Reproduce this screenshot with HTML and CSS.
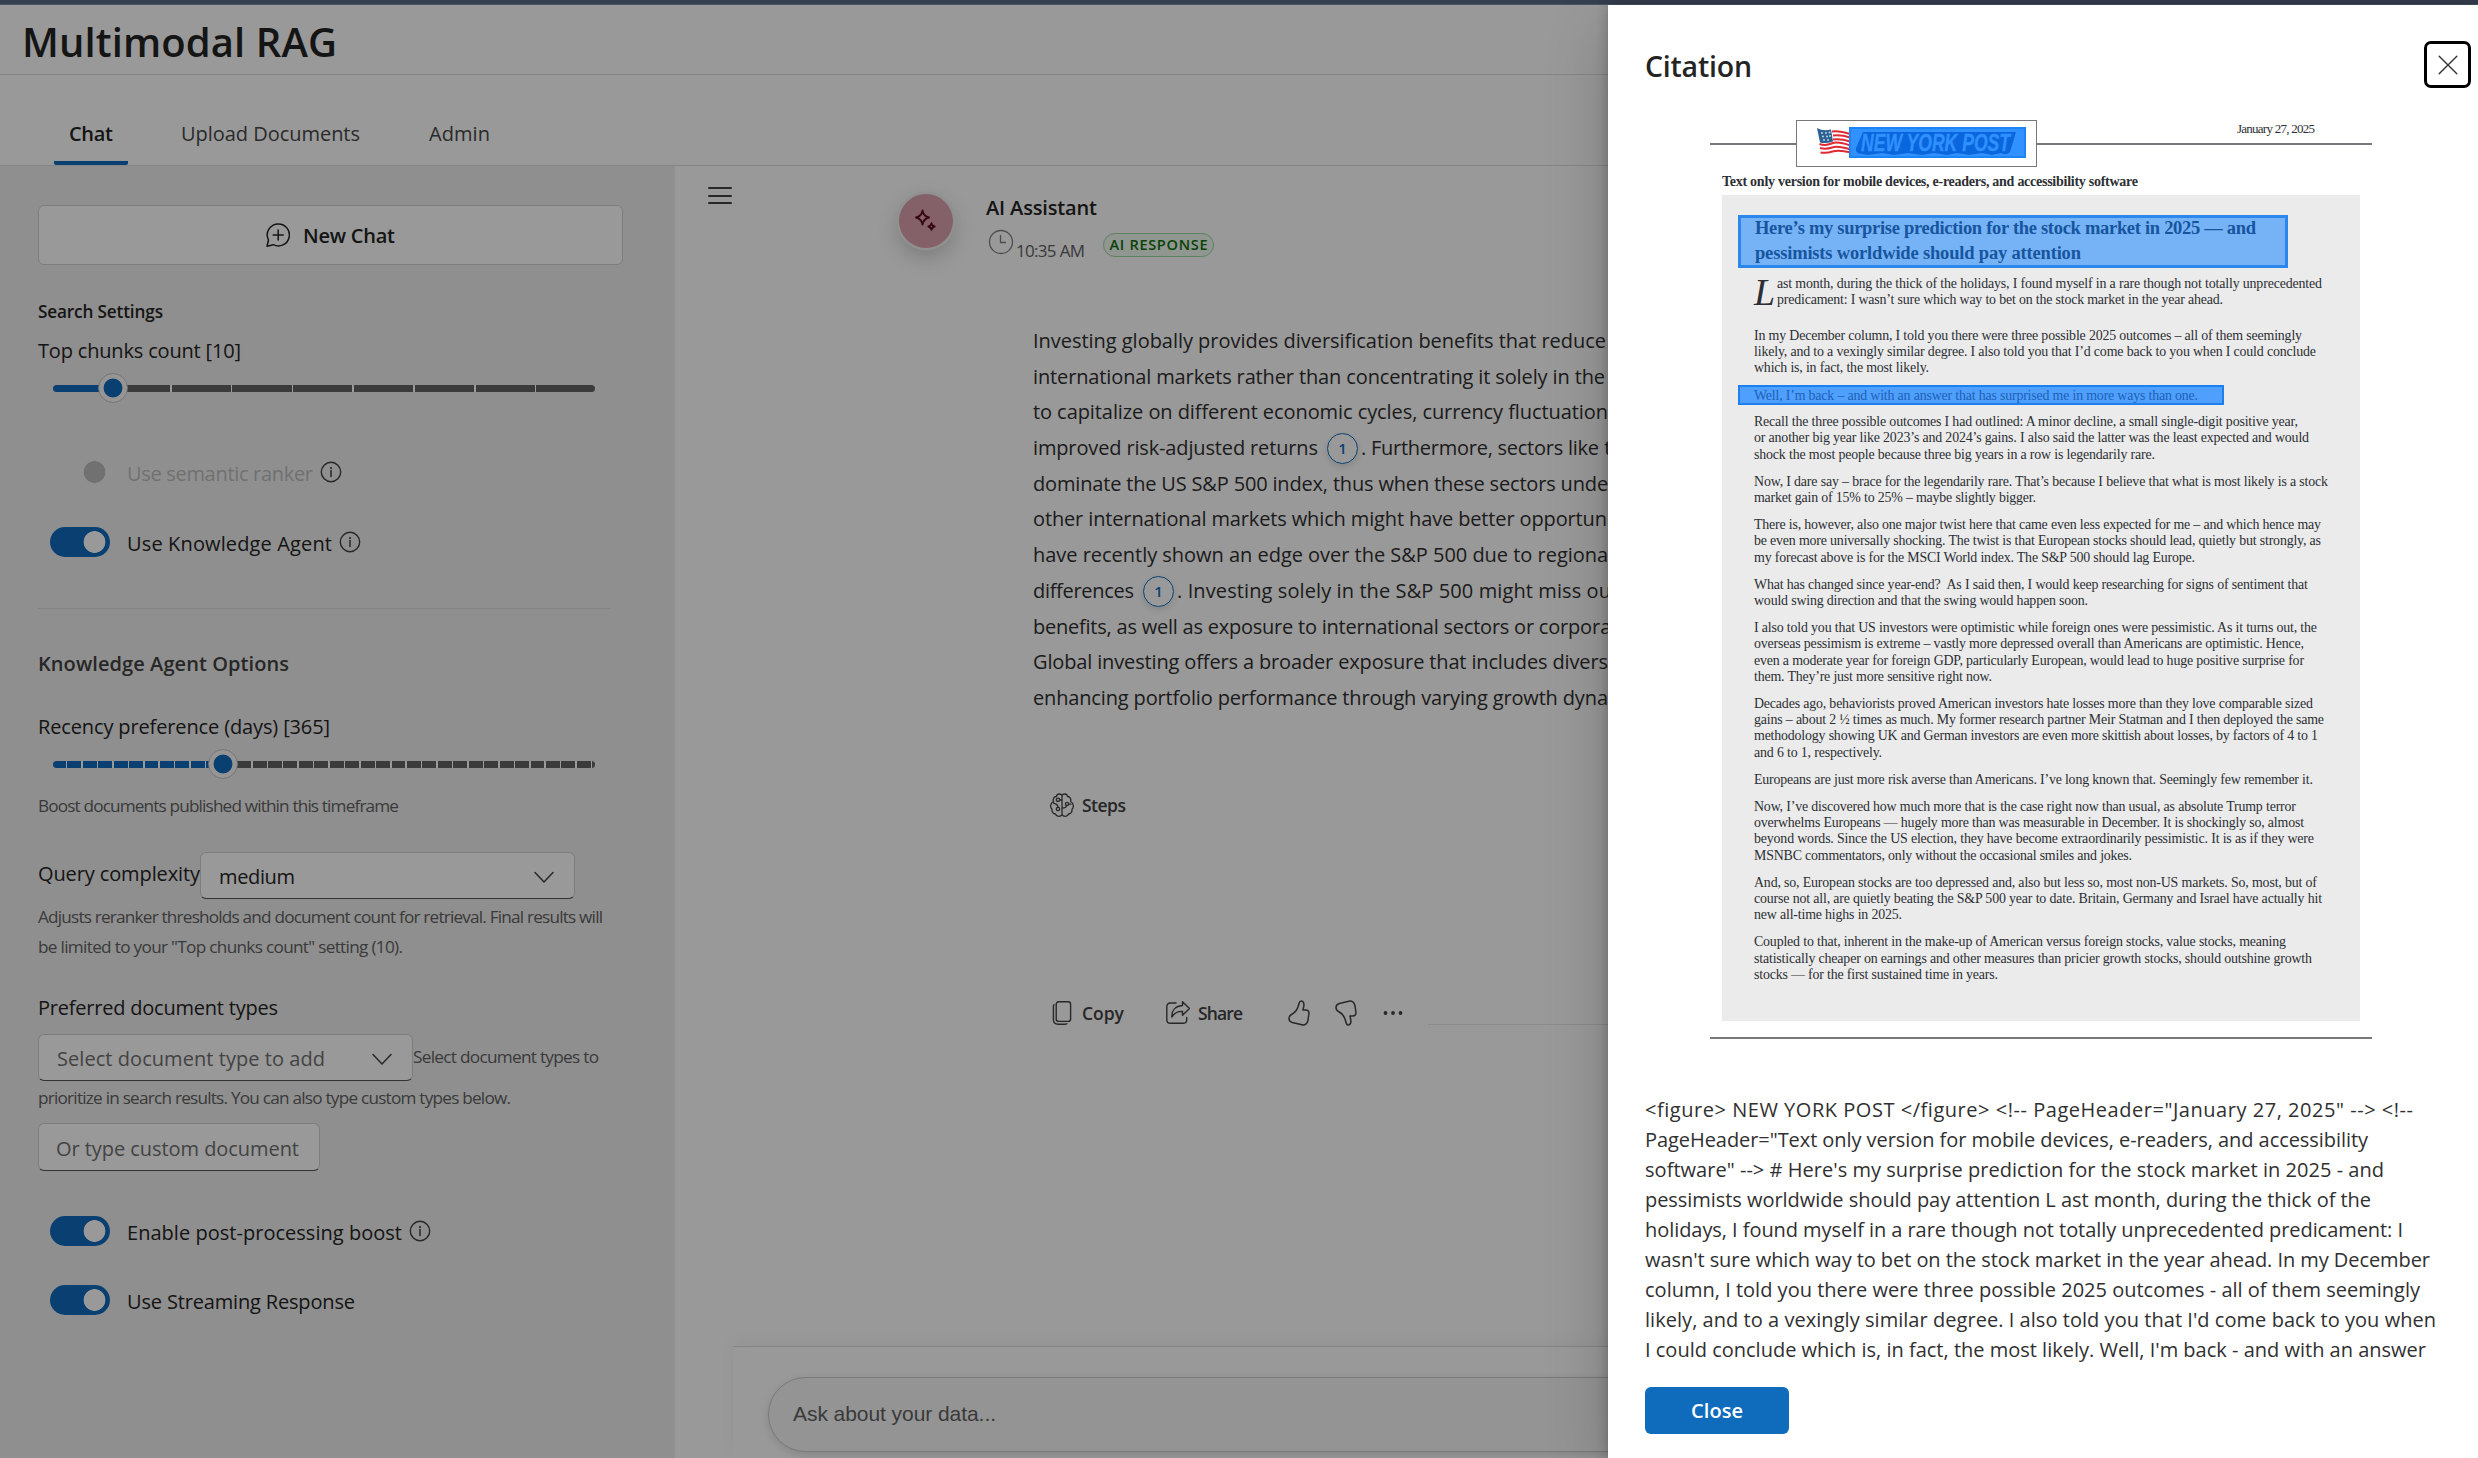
FILE: index.html
```html
<!DOCTYPE html>
<html lang="en">
<head>
<meta charset="utf-8">
<title>Multimodal RAG</title>
<link rel="stylesheet" href="styles.css">
</head>
<body>
<svg width="0" height="0" class="defs">
  <symbol id="info" viewBox="0 0 22 22"><circle cx="11" cy="11" r="9.7" fill="none" stroke="currentColor" stroke-width="1.4"/><path d="M11 9.6v6" stroke="currentColor" stroke-width="1.5" stroke-linecap="round"/><circle cx="11" cy="7" r="1.1" fill="currentColor"/></symbol>
  <symbol id="chevron" viewBox="0 0 20 12"><path d="M1 1l9 9.5L19 1" fill="none" stroke="currentColor" stroke-width="1.5" stroke-linecap="round" stroke-linejoin="round"/></symbol>
  <symbol id="thumb" viewBox="0 0 22 26"><path d="M13.2 1c2.3 0 3 2.5 2.6 5.2L15 10h2.6c2.400 0 3.700 1.600 3.300 4l-1 6.600c-.6 3.200-3 4.900-6 4.200l-9.600-2.300C2.200 21.900 1 20.500 1 18.500c0-2 .9-3.200 2.500-4C7.500 12.500 10 8.500 11.200 3c.3-1.300 1-2 2-2z" fill="none" stroke="currentColor" stroke-width="1.500" stroke-linejoin="round"/></symbol>
</svg>
<div class="topbar"></div>
<div class="app">
  <header class="header"><h1 data-w="315">Multimodal RAG</h1></header>
  <nav class="tabs">
    <div class="tab active"><span data-w="44">Chat</span></div>
    <div class="tab"><span data-w="179">Upload Documents</span></div>
    <div class="tab"><span data-w="61">Admin</span></div>
  </nav>
  <div class="body">
    <aside class="sidebar">
      <button class="newchat">
        <svg width="24" height="24" viewBox="0 0 24 24" fill="none" stroke="currentColor" stroke-width="1.500" stroke-linecap="round" stroke-linejoin="round"><path d="M12.400.9a11 11 0 1 1-5 20.800L1 23.200l1.500-6.200A11 11 0 0 1 12.400.9z"/><path d="M12.200 7v10M7.200 12h10"/></svg>
        <span data-w="92">New Chat</span>
      </button>
      <h3 class="search-title"><span data-w="125">Search Settings</span></h3>
      <div class="field-label chunks-label"><span data-w="203">Top chunks count [10]</span></div>
      <div class="slider"><div class="rail rail-chunks"></div><i class="thumb thumb-chunks"></i></div>
      <div class="switch-row semantic off"><i class="switch"></i><label data-w="186">Use semantic ranker</label><svg class="info"><use href="#info"/></svg></div>
      <div class="switch-row agent"><i class="switch"></i><label data-w="205">Use Knowledge Agent</label><svg class="info"><use href="#info"/></svg></div>
      <hr class="divider">
      <h2 class="agent-title"><span data-w="251">Knowledge Agent Options</span></h2>
      <div class="field-label recency-label"><span data-w="292">Recency preference (days) [365]</span></div>
      <div class="slider"><div class="rail rail-recency"></div><i class="thumb thumb-recency"></i></div>
      <div class="note boost-note"><span data-w="361">Boost documents published within this timeframe</span></div>
      <div class="inline-field query"><span class="lbl" data-w="162">Query complexity</span><div class="select"><span data-w="76">medium</span><svg class="chev"><use href="#chevron"/></svg></div></div>
      <div class="note adjust-note"><span data-w="565">Adjusts reranker thresholds and document count for retrieval. Final results will</span><span data-w="365">be limited to your "Top chunks count" setting (10).</span></div>
      <div class="field-label types-label"><span data-w="240">Preferred document types</span></div>
      <div class="inline-field types"><div class="select placeholder"><span data-w="268">Select document type to add</span><svg class="chev"><use href="#chevron"/></svg></div><span class="note" data-w="186">Select document types to</span></div>
      <div class="note types-note"><span data-w="473">prioritize in search results. You can also type custom types below.</span></div>
      <div class="textbox"><span data-w="243">Or type custom document</span></div>
      <div class="switch-row post"><i class="switch"></i><label data-w="275">Enable post-processing boost</label><svg class="info"><use href="#info"/></svg></div>
      <div class="switch-row stream"><i class="switch"></i><label data-w="228">Use Streaming Response</label></div>
    </aside>
    <main class="main">
      <div class="thread">
        <div class="burger"><i></i><i></i><i></i></div>
        <div class="avatar"><svg width="24" height="24" viewBox="0 0 24 24" fill="none" stroke="currentColor" stroke-width="1.800" stroke-linejoin="round"><path d="M9.500 1.500c.7 4.300 2.200 6 6.500 7-4.300 1-5.800 2.700-6.500 7-.7-4.300-2.200-6-6.500-7 4.300-1 5.800-2.700 6.500-7z"/><path d="M18.500 14.200c.3 2 1 2.800 3.200 3.300-2.200.5-2.900 1.300-3.200 3.300-.3-2-1-2.800-3.200-3.300 2.200-.5 2.900-1.300 3.200-3.300z"/></svg></div>
        <article class="message">
          <div class="author"><span data-w="111">AI Assistant</span></div>
          <div class="meta">
            <svg class="clock" width="26" height="26" viewBox="0 0 26 26" fill="none" stroke="currentColor" stroke-width="1.300"><circle cx="13" cy="13" r="11.500"/><path d="M12.500 6v7.500H18"/></svg>
            <span class="time"><span data-w="69">10:35 AM</span></span>
            <span class="badge"><span data-w="98">AI RESPONSE</span></span>
          </div>
          <div class="answer">
            <p><span data-w="573">Investing globally provides diversification benefits that reduce</span> risk</p>
            <p><span data-w="572">international markets rather than concentrating it solely in the</span> US</p>
            <p><span data-w="575">to capitalize on different economic cycles, currency fluctuation</span>s</p>
            <p><span data-w="285">improved risk-adjusted returns</span><a class="cite">1</a><span data-w="238">. Furthermore, sectors like</span> tech</p>
            <p><span data-w="564">dominate the US S&amp;P 500 index, thus when these sectors und</span>erperform</p>
            <p><span data-w="574">other international markets which might have better opportun</span>ities</p>
            <p><span data-w="564">have recently shown an edge over the S&amp;P 500 due to region</span>al</p>
            <p><span data-w="101">differences</span><a class="cite">1</a><span data-w="434">. Investing solely in the S&amp;P 500 might miss ou</span>t</p>
            <p><span data-w="559">benefits, as well as exposure to international sectors or corpo</span>rate</p>
            <p><span data-w="575">Global investing offers a broader exposure that includes divers</span>e</p>
            <p><span data-w="564">enhancing portfolio performance through varying growth dyn</span>amics</p>
          </div>
          <div class="steps">
            <svg width="24" height="24" viewBox="0 0 24 24" fill="none" stroke="currentColor" stroke-width="1.300" stroke-linecap="round" stroke-linejoin="round"><path d="M12 2.500C11 .3 6.800.4 6.500 3.500 3.700 3.600 2.600 6.300 3.500 8.500 0 10.200 0 14.500 2 16.200c-.3 2.800 1.300 4.600 3.500 4.800C6.300 24 10.800 24 12 21.500M12 2.500c1-2.200 5.200-2.100 5.500 1 2.800.1 3.900 2.800 3 5 3.500 1.700 3.500 6 1.500 7.700.3 2.800-1.300 4.600-3.500 4.800-.8 3-5.300 3-6.500.5M12 2.500v19M9.500 7H12M3.500 10c1.600 1.300 4.500.6 4.500 4M16.500 12.500c0 2-2 2.500-4.500 2.500M18.500 11.200H21"/><circle cx="8" cy="6.800" r="1.700"/><circle cx="8" cy="16" r="1.700"/><circle cx="17" cy="11" r="1.600"/></svg>
            <span data-w="44">Steps</span>
          </div>
          <div class="actions">
            <svg width="24" height="24" viewBox="0 0 24 24" fill="none" stroke="currentColor" stroke-width="1.400" stroke-linecap="round"><rect x="6.200" y=".8" width="14.400" height="19.600" rx="2.400"/><path d="M4 3.800C3.500 4.300 3.400 5 3.400 5.800v12.400c0 3.200 1.600 5 4.800 5h6.600c1 0 1.500-.1 2-.5"/></svg>
            <span data-w="42">Copy</span>
            <svg class="share" width="24" height="24" viewBox="0 0 24 24" fill="none" stroke="currentColor" stroke-width="1.400" stroke-linecap="round" stroke-linejoin="round"><path d="M10 2H4.500C2.200 2 .8 3.400.8 5.700v13c0 2.300 1.400 3.600 3.700 3.600H17c2.300 0 3.700-1.300 3.700-3.600v-2.200"/><path d="M16.500.8l7 6.700-7 6.700v-3.800c-4.600-.2-8 1.400-10.700 5.600C5.500 9.400 9.500 5 16.500 4.500z"/></svg>
            <span data-w="45">Share</span>
            <svg class="up" width="22" height="26"><use href="#thumb"/></svg>
            <svg class="down" width="22" height="26"><use href="#thumb"/></svg>
            <svg class="more" width="20" height="6" viewBox="0 0 20 6" fill="currentColor"><circle cx="2.500" cy="3" r="1.900"/><circle cx="10" cy="3" r="1.900"/><circle cx="17.500" cy="3" r="1.900"/></svg>
            <i class="rule"></i>
          </div>
        </article>
      </div>
      <div class="composer"><div class="ask"><span data-w="203">Ask about your data...</span></div></div>
    </main>
  </div>
</div>
<div class="backdrop"></div>
<section class="panel">
  <header class="panel-head"><h2><span data-w="107">Citation</span></h2><button class="x"><svg width="20" height="20" viewBox="0 0 20 20" stroke="#333" stroke-width="1.400" stroke-linecap="round"><path d="M1.200 1.200l17.600 17.600M18.800 1.200L1.200 18.800"/></svg></button></header>
  <div class="doc">
    <div class="masthead">
      <i class="line left"></i>
      <div class="logo">
        <svg width="36" height="30" viewBox="0 0 36 30"><path d="M2 4q5 3 10 2t9 0 14 1v18q-6-3-12-1T5 27z" fill="#fff"/><g fill="none" stroke="#df2a33" stroke-width="2"><path d="M16 4.500q7-1 18 2.500M17 8.500q8-1 17 2M17 12.500q8-1 17 2M3.500 17q6 2 12-.5t18.500 2M4 21q6 1.500 12-.5t18.500 2M4.500 25.500q6 1 12-1t18.500 1"/></g><path d="M1 1q6 3.500 14 1.500l2 12q-7 2.500-13 1z" fill="#2d6191"/><g fill="#c9dcec"><circle cx="6" cy="6" r=".9"/><circle cx="10" cy="6" r=".9"/><circle cx="13.500" cy="5.500" r=".9"/><circle cx="7" cy="9.500" r=".9"/><circle cx="11" cy="9.500" r=".9"/><circle cx="14" cy="9" r=".9"/><circle cx="8" cy="13" r=".9"/><circle cx="12" cy="13" r=".9"/></g></svg>
        <svg class="mark" width="177" height="31" viewBox="0 0 177 31"><rect x="1" y="1" width="175" height="29" fill="#3091ff" stroke="#1c85f5" stroke-width="2"/><path d="M14 5h153l-6 20q-4 4-9 1l-9 2-10-2-13 2-12-2-10 2-13-2-12 2-14-2-14 2-12-2-14 2-12-2H9q-3-2-2-5z" fill="#0a66dc"/><text x="12" y="24" textLength="149" lengthAdjust="spacingAndGlyphs" fill="#2f90ff">NEW YORK POST</text></svg>
      </div>
      <i class="line right"></i>
      <span class="date"><span data-w="78">January 27, 2025</span></span>
    </div>
    <div class="textonly"><span data-w="416">Text only version for mobile devices, e-readers, and accessibility software</span></div>
    <div class="paper">
      <div class="hl head"><span data-w="501">Here’s my surprise prediction for the stock market in 2025 — and</span><span data-w="326">pessimists worldwide should pay attention</span></div>
      <div class="lead"><b>L</b><p><span data-w="545">ast month, during the thick of the holidays, I found myself in a rare though not totally unprecedented</span><span data-w="446">predicament: I wasn’t sure which way to bet on the stock market in the year ahead.</span></p></div>
      <p><span data-w="548">In my December column, I told you there were three possible 2025 outcomes – all of them seemingly</span><span data-w="562">likely, and to a vexingly similar degree. I also told you that I’d come back to you when I could conclude</span><span data-w="175">which is, in fact, the most likely.</span></p>
      <div class="hl well"><span data-w="444">Well, I’m back – and with an answer that has surprised me in more ways than one.</span></div>
      <p><span data-w="544">Recall the three possible outcomes I had outlined: A minor decline, a small single-digit positive year,</span><span data-w="555">or another big year like 2023’s and 2024’s gains. I also said the latter was the least expected and would</span><span data-w="401">shock the most people because three big years in a row is legendarily rare.</span></p>
      <p><span data-w="574">Now, I dare say – brace for the legendarily rare. That’s because I believe that what is most likely is a stock</span><span data-w="282">market gain of 15% to 25% – maybe slightly bigger.</span></p>
      <p><span data-w="567">There is, however, also one major twist here that came even less expected for me – and which hence may</span><span data-w="567">be even more universally shocking. The twist is that European stocks should lead, quietly but strongly, as</span><span data-w="441">my forecast above is for the MSCI World index. The S&amp;P 500 should lag Europe.</span></p>
      <p><span data-w="554">What has changed since year-end?&nbsp; As I said then, I would keep researching for signs of sentiment that</span><span data-w="334">would swing direction and that the swing would happen soon.</span></p>
      <p><span data-w="563">I also told you that US investors were optimistic while foreign ones were pessimistic. As it turns out, the</span><span data-w="550">overseas pessimism is extreme – vastly more depressed overall than Americans are optimistic. Hence,</span><span data-w="550">even a moderate year for foreign GDP, particularly European, would lead to huge positive surprise for</span><span data-w="238">them. They’re just more sensitive right now.</span></p>
      <p><span data-w="559">Decades ago, behaviorists proved American investors hate losses more than they love comparable sized</span><span data-w="570">gains – about 2 ½ times as much. My former research partner Meir Statman and I then deployed the same</span><span data-w="564">methodology showing UK and German investors are even more skittish about losses, by factors of 4 to 1</span><span data-w="128">and 6 to 1, respectively.</span></p>
      <p><span data-w="559">Europeans are just more risk averse than Americans. I’ve long known that. Seemingly few remember it.</span></p>
      <p><span data-w="542">Now, I’ve discovered how much more that is the case right now than usual, as absolute Trump terror</span><span data-w="550">overwhelms Europeans — hugely more than was measurable in December. It is shockingly so, almost</span><span data-w="560">beyond words. Since the US election, they have become extraordinarily pessimistic. It is as if they were</span><span data-w="378">MSNBC commentators, only without the occasional smiles and jokes.</span></p>
      <p><span data-w="563">And, so, European stocks are too depressed and, also but less so, most non-US markets. So, most, but of</span><span data-w="568">course not all, are quietly beating the S&amp;P 500 year to date. Britain, Germany and Israel have actually hit</span><span data-w="148">new all-time highs in 2025.</span></p>
      <p><span data-w="532">Coupled to that, inherent in the make-up of American versus foreign stocks, value stocks, meaning</span><span data-w="558">statistically cheaper on earnings and other measures than pricier growth stocks, should outshine growth</span><span data-w="244">stocks — for the first sustained time in years.</span></p>
    </div>
    <i class="foot"></i>
  </div>
  <div class="extract">
    <span data-w="768">&lt;figure&gt; NEW YORK POST &lt;/figure&gt; &lt;!-- PageHeader="January 27, 2025" --&gt; &lt;!--</span>
    <span data-w="723">PageHeader="Text only version for mobile devices, e-readers, and accessibility</span>
    <span data-w="739">software" --&gt; # Here's my surprise prediction for the stock market in 2025 - and</span>
    <span data-w="726">pessimists worldwide should pay attention L ast month, during the thick of the</span>
    <span data-w="758">holidays, I found myself in a rare though not totally unprecedented predicament: I</span>
    <span data-w="785">wasn't sure which way to bet on the stock market in the year ahead. In my December</span>
    <span data-w="775">column, I told you there were three possible 2025 outcomes - all of them seemingly</span>
    <span data-w="791">likely, and to a vexingly similar degree. I also told you that I'd come back to you when</span>
    <span data-w="781">I could conclude which is, in fact, the most likely. Well, I'm back - and with an answer</span>
  </div>
  <button class="close"><span data-w="52">Close</span></button>
</section>
<script src="fit.js"></script>
</body>
</html>
```
FILE: styles.css
```css
* { box-sizing: border-box; }
body { margin: 0; width: 2478px; height: 1458px; overflow: hidden; position: relative; display: flex; flex-direction: column; background: #fff; color: #242424; font: 20px/30px "Open Sans", "Noto Sans", sans-serif; }
h1, h2, h3, p, hr { margin: 0; }
svg { display: block; flex: none; }
button { font: inherit; padding: 0; }
[data-w] { display: inline-block; white-space: nowrap; }
.defs { position: absolute; }
.topbar { height: 5px; flex: none; background: #363f50; border-bottom: 1px solid #4c5566; }
.app { flex: 1; display: flex; flex-direction: column; min-height: 0; }

.header { height: 70px; flex: none; border-bottom: 1px solid #e0e0e0; padding: 12px 0 0 22px; }
h1 { font-size: 40px; line-height: 50px; font-weight: 600; }
.tabs { height: 91px; flex: none; border-bottom: 1px solid #e0e0e0; display: flex; padding-left: 54px; gap: 53px; color: #484848; }
.tab { padding-top: 44px; line-height: 30px; }
.tab + .tab { padding-right: 16px; }
.tab.active { width: 74px; text-align: center; color: #242424; font-weight: 600; border-bottom: 4px solid #0f6cbd; border-radius: 0 0 2px 2px; }

.body { flex: 1; display: flex; min-height: 0; }
.sidebar { width: 675px; flex: none; background: #efefef; padding: 39px 51px 0 38px; display: flex; flex-direction: column; }
.sidebar > * { flex: none; }
.newchat { height: 60px; width: 585px; background: #fff; border: 1.5px solid #d1d1d1; border-radius: 6px; display: flex; align-items: center; justify-content: center; gap: 13px; font-weight: 600; color: #242424; }
.newchat span { padding-top: 1px; }
.search-title { font-size: 17.200px; font-weight: 600; margin-top: 32px; }
.chunks-label { margin-top: 9px; }
.slider { height: 30px; margin-top: 7px; margin-bottom: 1px; padding: 11.500px 0 0 15px; position: relative; }
.rail { width: 542px; height: 7px; border-radius: 4px; }
.rail-chunks { background: repeating-linear-gradient(90deg, transparent 0 56px, #fff 56px 57.500px, transparent 57.500px 60.800px) no-repeat 61px 0/485px 100%, linear-gradient(90deg, #0f6cbd 60px, #636363 60px); }
.rail-recency { background: repeating-linear-gradient(90deg, transparent 0 12.800px, #fff 12.800px 14.300px, transparent 14.300px 15.440px), linear-gradient(90deg, #0f6cbd 170px, #636363 170px); }
.thumb { position: absolute; top: 0; width: 30px; height: 30px; border-radius: 50%; border: 1.500px solid #c4c4c4; background: radial-gradient(circle, #0f6cbd 9px, #f8f8f8 9.800px); }
.thumb-chunks { left: 60px; }
.thumb-recency { left: 170px; }
.switch-row { display: flex; height: 30px; padding-left: 12px; }
.switch { width: 60px; height: 30px; flex: none; border-radius: 15px; background: radial-gradient(circle at 44.500px 15px, #fff 10.500px, #0f6cbd 11.200px); }
.switch-row label { margin: 2px 0 0 17px; }
.info { width: 22px; height: 22px; margin: 4px 0 0 7px; color: #424242; }
.off .switch { background: radial-gradient(circle at 44.500px 15px, #bdbdbd 10.500px, transparent 11.200px); }
.off label { color: #bdbdbd; }
.semantic { margin-top: 53px; }
.agent { margin-top: 40px; }
.divider { border: 0; height: 1px; background: #dcdcdc; width: 573px; margin-top: 51px; }
.agent-title { font-size: 20px; line-height: 30px; font-weight: 600; color: #424242; margin-top: 40px; }
.recency-label { margin-top: 33px; }
.note { font-size: 17.200px; color: #616161; }
.boost-note { margin-top: 11px; }
.inline-field { display: flex; height: 47px; align-items: center; }
.query { margin-top: 31px; }
.query .lbl { margin-top: -3px; }
.select { width: 375px; height: 47px; background: #fff; border: 1.5px solid #d1d1d1; border-bottom-color: #555; border-radius: 6px; display: flex; align-items: center; justify-content: space-between; padding: 3px 20px 0 18px; }
.chev { width: 20px; height: 13px; color: #424242; }
.placeholder { color: #707070; }
.adjust-note { display: flex; flex-direction: column; align-items: flex-start; margin-top: 3px; }
.types-label { margin-top: 31px; }
.types { margin-top: 11px; }
.types .note { margin-top: -2px; }
.types-note { margin-top: 2px; }
.textbox { width: 282px; height: 48px; margin-top: 10px; background: #fff; border: 1.500px solid #d1d1d1; border-bottom-color: #555; border-radius: 6px; color: #707070; padding: 10px 0 0 17px; }
.post { margin-top: 45px; }
.stream { margin-top: 39px; }

.main { flex: 1; display: flex; flex-direction: column; min-width: 0; overflow: hidden; }
.thread { flex: 1; display: flex; align-items: flex-start; padding-left: 33px; white-space: nowrap; }
.burger { width: 24px; margin-top: 21px; display: flex; flex-direction: column; gap: 5.500px; flex: none; }
.burger i { height: 2px; background: #424242; border-radius: 1px; }
.avatar { width: 54px; height: 54px; flex: none; margin: 28px 0 0 167px; border-radius: 50%; background: #dda0ad; color: #5c0a1c; display: flex; align-items: center; justify-content: center; padding: 0 2px 0 0; box-shadow: 0 0 0 2.500px #f0f0f0, 0 8px 22px rgba(0,0,0,.22); }
.message { margin-left: 33px; padding-top: 27px; flex: 1; }
.author { font-weight: 600; }
.meta { display: flex; align-items: flex-start; margin-top: 6px; height: 30px; padding-left: 2px; color: #616161; }
.clock { color: #808080; }
.time { font-size: 17px; margin: 7px 0 0 2px; }
.badge { margin: 4px 0 0 18px; width: 111px; height: 24px; border: 1.500px solid #9fd89f; border-radius: 12px; background: #f1faf1; color: #0e700e; font-size: 14.500px; line-height: 21px; font-weight: 600; text-align: center; }
.answer { margin: 64px 0 0 47px; line-height: 35.700px; color: #303030; }
.answer p { height: 35.700px; white-space: pre; }
.cite { display: inline-block; vertical-align: middle; width: 31px; height: 31px; border: 1.500px solid #0f6cbd; border-radius: 50%; color: #0f6cbd; font-size: 15px; font-weight: 600; line-height: 29px; text-align: center; margin: -2px 3px 0 9px; box-shadow: 0 3px 6px rgba(0,0,0,.12); }
.steps, .actions { display: flex; align-items: center; height: 24px; margin-left: 64px; gap: 8px; font-size: 17.500px; font-weight: 600; color: #424242; }
.steps { margin-top: 77px; }
.actions { margin-top: 184px; }
.share { margin-left: 34px; }
.up { margin-left: 37px; }
.down { margin-left: 17px; transform: scaleY(-1); }
.more { margin-left: 18px; }
.rule { flex: 1; height: 1px; background: #e6e6e6; align-self: flex-end; margin-left: 17px; }
.composer { height: 112px; flex: none; margin-left: 58px; border-top: 1px solid #dcdcdc; box-shadow: 0 -4px 16px rgba(0,0,0,.04); padding: 30px 0 0 35px; }
.ask { height: 75px; border: 1.500px solid #cacaca; border-radius: 38px; background: #f7f7f7; font: 21px/72px "Liberation Sans", Arial, sans-serif; color: #616161; padding-left: 24px; box-shadow: 0 3px 8px rgba(0,0,0,.12); }

.backdrop { position: absolute; inset: 5px 0 0 0; background: rgba(0,0,0,.4); }
.panel { position: absolute; top: 5px; right: 0; bottom: 0; width: 870px; background: #fff; padding-left: 37px; box-shadow: 0 0 12px rgba(0,0,0,.24), 0 20px 60px rgba(0,0,0,.2); }
.panel-head { display: flex; justify-content: space-between; align-items: center; padding: 36px 7px 0 0; height: 83px; }
.panel-head h2 { font-size: 28.500px; line-height: 40px; font-weight: 600; padding-top: 3px; }
.x { width: 47px; height: 47px; border: 3px solid #000; border-radius: 7px; background: #fff; display: flex; align-items: center; justify-content: center; }
.doc { width: 662px; margin: 32px 0 0 65px; font-family: "Liberation Serif", "Times New Roman", serif; font-size: 13.900px; line-height: 16.200px; color: #2c2f33; }
.masthead { position: relative; display: flex; align-items: center; height: 47px; }
.line { height: 2px; background: #77787b; width: 86px; }
.line.right { flex: 1; }
.logo { width: 241px; height: 47px; border: 1.500px solid #77787b; display: flex; align-items: center; padding: 0 0 3px 19px; }
.logo .mark { margin-left: -3px; overflow: visible; }
.mark text { font: italic bold 24px "Liberation Sans", Arial, sans-serif; stroke: #2f90ff; stroke-width: .4; }
.date { position: absolute; left: 527px; top: 0; line-height: 17px; font-size: 13px; }
.textonly { font-weight: bold; font-size: 14px; margin: 6px 0 0 12px; height: 22px; line-height: 18px; }
.paper { margin: 0 12px; height: 826px; background: #ebebeb; padding: 20px 0 0 32px; }
.paper p { margin-bottom: 11px; display: flex; flex-direction: column; align-items: flex-start; }
.hl { margin-left: -16px; }
.head { width: 550px; height: 53px; background: #76b3f6; border: 3px solid #2c87ec; color: #17559f; font-weight: bold; font-size: 18.500px; line-height: 25px; padding: 0 0 1px 14px; display: flex; flex-direction: column; align-items: flex-start; justify-content: center; }
.lead { display: flex; margin-top: 8px; height: 52px; }
.lead b { width: 23px; font: italic 38px/32px "Liberation Serif", serif; }
.well { width: 486px; height: 20px; margin: -3px 0 9.500px -16px; background: #4f9fff; border: 2px solid #1d80ef; color: #1d62b5; padding-left: 14px; line-height: 17px; }
.foot { display: block; height: 2px; background: #77787b; margin-top: 16px; }
.extract { margin-top: 56px; display: flex; flex-direction: column; align-items: flex-start; color: #303030; }
.close { display: block; width: 144px; height: 47px; margin-top: 22px; border: 0; border-radius: 6px; background: #0f6cbd; color: #fff; font-weight: 600; }
```
FILE: fit.js
```js
// Tracks each run of text so that it fills the measure given in data-w.
document.querySelectorAll('[data-w]').forEach(function (el) {
  el.style.letterSpacing = '0';
  var n = el.textContent.length - 1;
  var natural = el.getBoundingClientRect().width;
  var step = (parseFloat(el.dataset.w) - natural) / n;
  el.style.letterSpacing = step.toFixed(3) + 'px';
  el.style.marginRight = (-step).toFixed(3) + 'px';
});
```
